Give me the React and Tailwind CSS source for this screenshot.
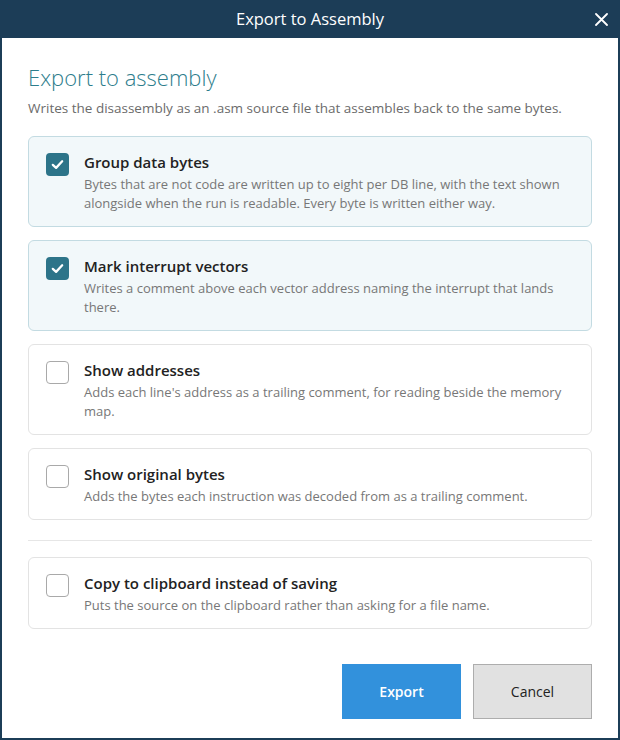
import React from "react";

const font = { fontFamily: '"Open Sans", "Noto Sans", sans-serif' };

function Check({ checked }) {
  if (checked) {
    return (
      <div className="mt-[2px] flex h-[23px] w-[23px] shrink-0 items-center justify-center rounded-[4px] bg-[#2d7489]">
        <svg width="15" height="15" viewBox="0 0 16 16" fill="none">
          <path d="M3 8.4 L6.5 11.6 L13 4.6" stroke="white" strokeWidth="2.4" strokeLinecap="round" strokeLinejoin="round" />
        </svg>
      </div>
    );
  }
  return <div className="mt-[2px] h-[23px] w-[23px] shrink-0 rounded-[4px] border-[1.5px] border-[#a9a9a9] bg-white" />;
}

function Option({ checked, title, desc }) {
  return (
    <div
      className={
        "flex gap-[15px] rounded-[6px] border px-[17px] pt-[14px] pb-[13px] " +
        (checked ? "border-[#c3dbe2] bg-[#f2f8fa]" : "border-[#e3e3e3] bg-white")
      }
    >
      <Check checked={checked} />
      <div className="flex flex-col gap-[2px]">
        <div className="text-[15px] font-semibold leading-[22px] text-[#222]">{title}</div>
        <div className="text-[13px] leading-[19px] text-[#777]">{desc}</div>
      </div>
    </div>
  );
}

export default function App() {
  return (
    <div style={font} className="h-[740px] w-[620px] overflow-hidden border-2 border-t-0 border-[#1c3d57] bg-white">
      <div className="-mx-[2px] flex h-[38px] items-center justify-center bg-[#1c3d57] relative">
        <span className="text-[16.5px] text-white">Export to Assembly</span>
        <svg className="absolute right-[12px] top-[13px]" width="13" height="13" viewBox="0 0 13 13">
          <path d="M1 1 L12 12 M12 1 L1 12" stroke="white" strokeWidth="1.8" strokeLinecap="round" />
        </svg>
      </div>
      <div className="px-[26px] pt-[24px]">
        <h1 className="text-[22px] font-light leading-[30px] text-[#2d7d8c]">Export to assembly</h1>
        <p className="mt-[6px] text-[13.5px] leading-[20px] text-[#6b6b6b]">
          Writes the disassembly as an .asm source file that assembles back to the same bytes.
        </p>
        <div className="mt-[18px] flex flex-col gap-[13px]">
          <Option
            checked
            title="Group data bytes"
            desc="Bytes that are not code are written up to eight per DB line, with the text shown alongside when the run is readable. Every byte is written either way."
          />
          <Option
            checked
            title="Mark interrupt vectors"
            desc="Writes a comment above each vector address naming the interrupt that lands there."
          />
          <Option
            title="Show addresses"
            desc="Adds each line's address as a trailing comment, for reading beside the memory map."
          />
          <Option
            title="Show original bytes"
            desc="Adds the bytes each instruction was decoded from as a trailing comment."
          />
        </div>
        <div className="mt-[20px] mb-[16px] h-px bg-[#e6e6e6]" />
        <Option
          title="Copy to clipboard instead of saving"
          desc="Puts the source on the clipboard rather than asking for a file name."
        />
        <div className="mt-[35px] flex justify-end gap-[12px]">
          <button className="h-[55px] w-[119px] bg-[#3291dc] text-[14px] font-semibold text-white">Export</button>
          <button className="h-[55px] w-[119px] border border-[#adadad] bg-[#e1e1e1] text-[14px] text-[#222]">Cancel</button>
        </div>
      </div>
    </div>
  );
}
